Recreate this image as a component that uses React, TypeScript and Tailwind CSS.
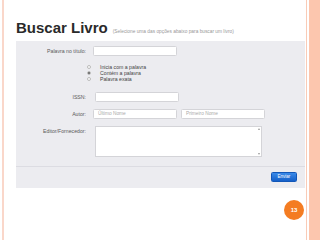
const label = "text-[5.2px] leading-[6px] text-[#5a5a5a] text-right w-[70px] shrink-0";
const input = "h-[10px] bg-white border border-[#d4d4d8] rounded-[1.5px] text-[4.8px] leading-[8px] text-[#aaa] pl-[4px]";

function Radio({ checked, text }: { checked?: boolean; text: string }) {
  return (
    <div className="flex items-center h-[6px]">
      <div className="w-[70px] shrink-0" />
      <span className="ml-[1px] w-[4px] h-[4px] rounded-full border border-[#bbb] bg-white flex items-center justify-center">
        {checked && <span className="w-[2px] h-[2px] rounded-full bg-[#555]" />}
      </span>
      <span className="ml-[9px] text-[5.2px] leading-[6px] text-[#444]">{text}</span>
    </div>
  );
}

export default function App() {
  return (
    <div className="w-[320px] h-[240px] bg-white flex overflow-hidden font-['Liberation_Sans',Arial,sans-serif]">
      <div className="w-[2px] ml-[2px] bg-[#fad7ca]" />
      <div className="flex-1 flex flex-col">
        <div className="flex items-baseline pl-[12px] pt-[20px]">
          <span className="text-[15px] leading-[15px] font-bold text-[#2a2a2a]">Buscar Livro</span>
          <span className="ml-[5px] text-[4.8px] text-[#999]">
            (Selecione uma das opções abaixo para buscar um livro)
          </span>
        </div>

        {/* painel */}
        <div className="ml-[12px] mr-[1px] mt-[6px] bg-[#ececf0] flex flex-col">
          <div className="pt-[5px] flex flex-col">
            <div className="flex items-center">
              <span className={label}>Palavra no título:</span>
              <div className={`${input} ml-[7px] w-[84px]`} />
            </div>

            <div className="mt-[8px] flex flex-col">
              <Radio text="Inicia com a palavra" />
              <Radio checked text="Contém a palavra" />
              <Radio text="Palavra exata" />
            </div>

            <div className="mt-[10px] flex items-center">
              <span className={label}>ISSN:</span>
              <div className={`${input} ml-[9px] w-[84px] h-[9px]`} />
            </div>

            <div className="mt-[7px] flex items-center">
              <span className={label}>Autor:</span>
              <div className={`${input} ml-[7px] w-[84px]`}>Último Nome</div>
              <div className={`${input} ml-[4px] w-[84px]`}>Primeiro Nome</div>
            </div>

            <div className="mt-[7px] flex items-start">
              <span className={`${label} mt-[2px]`}>Editor/Fornecedor:</span>
              <div className="ml-[9px] w-[167px] h-[31px] bg-white border border-[#d4d4d8] flex justify-end">
                <div className="w-[4px] flex flex-col justify-between items-center py-[1px]">
                  <span className="w-0 h-0 border-l-[1.5px] border-r-[1.5px] border-b-[2px] border-l-transparent border-r-transparent border-b-[#999]" />
                  <span className="w-0 h-0 border-l-[1.5px] border-r-[1.5px] border-t-[2px] border-l-transparent border-r-transparent border-t-[#999]" />
                </div>
              </div>
            </div>
          </div>

          <div className="mt-[9px] h-px bg-[#dcdce2]" />
          <div className="flex justify-end pt-[5px] pb-[6px] pr-[8px]">
            <button className="w-[26px] h-[10px] rounded-[1.5px] bg-gradient-to-b from-[#3a8ae8] to-[#1560c9] border border-[#1257b8] text-white text-[4.5px] leading-[8px]">
              Enviar
            </button>
          </div>
        </div>

        <div className="flex justify-end mt-[12px] pr-[2px]">
          <div className="w-[20px] h-[20px] rounded-full bg-[#f47c22] flex items-center justify-center text-white text-[6px] font-bold">
            13
          </div>
        </div>
      </div>
      <div className="w-px bg-[#f9cbb7]" />
      <div className="w-[2px] bg-white" />
      <div className="w-[11px] bg-[#fcc6ae]" />
    </div>
  );
}
